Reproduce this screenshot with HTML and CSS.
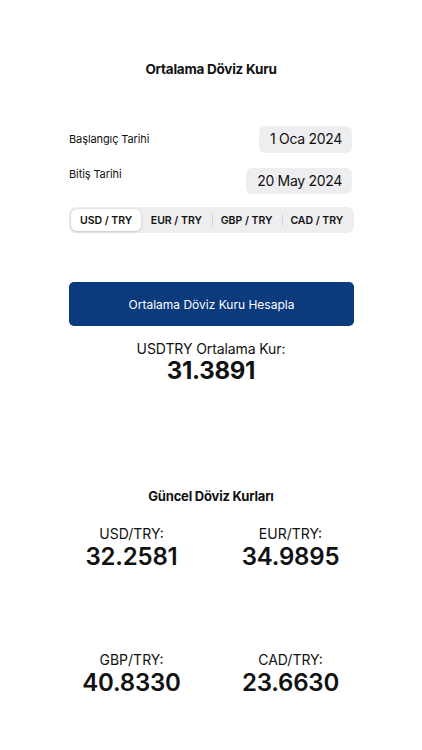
FILE: index.html
```html
<!DOCTYPE html>
<html lang="tr">
<head>
<meta charset="utf-8">
<link rel="stylesheet" href="styles.css">
</head>
<body>
<main class="page">
  <h1 class="title">Ortalama Döviz Kuru</h1>

  <section class="form">
    <div class="date-row first">
      <span class="date-label">Başlangıç Tarihi</span>
      <span class="date-pill">1 Oca 2024</span>
    </div>
    <div class="date-row second">
      <span class="date-label">Bitiş Tarihi</span>
      <span class="date-pill">20 May 2024</span>
    </div>

    <div class="segmented">
      <span class="seg selected">USD / TRY</span>
      <span class="seg">EUR / TRY</span>
      <span class="seg sep">GBP / TRY</span>
      <span class="seg sep">CAD / TRY</span>
    </div>

    <button class="calc-btn">Ortalama Döviz Kuru Hesapla</button>
  </section>

  <section class="result">
    <div class="result-label">USDTRY Ortalama Kur:</div>
    <div class="result-value">31.3891</div>
  </section>

  <h2 class="subtitle">Güncel Döviz Kurları</h2>

  <section class="rates">
    <div class="rate">
      <div class="rate-label">USD/TRY:</div>
      <div class="rate-value">32.2581</div>
    </div>
    <div class="rate">
      <div class="rate-label">EUR/TRY:</div>
      <div class="rate-value">34.9895</div>
    </div>
    <div class="rate lower">
      <div class="rate-label">GBP/TRY:</div>
      <div class="rate-value">40.8330</div>
    </div>
    <div class="rate lower">
      <div class="rate-label">CAD/TRY:</div>
      <div class="rate-value">23.6630</div>
    </div>
  </section>
</main>
</body>
</html>
```

FILE: styles.css
```css
* { box-sizing: border-box; }
html, body { margin: 0; padding: 0; background: #ffffff; }
body {
  font-family: Inter, "Open Sans", "Liberation Sans", sans-serif;
  color: #000;
  width: 422px;
}
.page {
  padding-top: 59px;
  display: flex;
  flex-direction: column;
  align-items: center;
}
.title {
  margin: 0;
  font-size: 13.5px;
  line-height: 20px;
  font-weight: 700;
  letter-spacing: -0.25px;
  color: #111;
}
.form {
  width: 285px;
  margin-top: 47px;
  margin-left: 1px;
  display: flex;
  flex-direction: column;
}
.date-row {
  display: flex;
  justify-content: space-between;
}
.date-row.first { align-items: center; height: 27px; }
.date-row.second { align-items: flex-start; height: 26px; margin-top: 15px; }
.date-label {
  font-size: 11px;
  line-height: 13px;
  letter-spacing: -0.1px;
  color: #111;
}
.date-pill {
  background: #eeeef0;
  border-radius: 6px;
  font-size: 14px;
  letter-spacing: -0.3px;
  line-height: 26px;
  height: 27px;
  padding: 0 10px 0 11px;
  color: #111;
  margin-right: 2px;
}
.date-row.second .date-pill { height: 26px; }
.segmented {
  margin-top: 13px;
  height: 26px;
  background: #eeeef0;
  border-radius: 7px;
  padding: 2px;
  display: grid;
  grid-template-columns: repeat(4, 1fr);
}
.seg {
  display: flex;
  align-items: center;
  justify-content: center;
  font-size: 10.5px;
  font-weight: 600;
  color: #111;
  position: relative;
}
.seg.sep::before {
  content: "";
  position: absolute;
  left: 0;
  top: 5px;
  bottom: 5px;
  width: 1px;
  background: #d6d6da;
}
.seg.selected {
  background: #fff;
  border-radius: 6px;
  box-shadow: 0 1px 3px rgba(0,0,0,0.14), 0 0 0 0.5px rgba(0,0,0,0.05);
}
.calc-btn {
  margin-top: 49px;
  height: 44px;
  border: none;
  border-radius: 5px;
  background: #0b3a7d;
  color: #fff;
  font-family: inherit;
  font-size: 12px;
  font-weight: 400;
}
.result {
  margin-top: 15px;
  text-align: center;
}
.result-label {
  font-size: 14px;
  line-height: 16px;
  letter-spacing: -0.1px;
  color: #111;
}
.result-value {
  font-size: 24px;
  line-height: 28px;
  font-weight: 700;
  letter-spacing: -0.3px;
  color: #111;
}
.subtitle {
  margin: 102px 0 0;
  font-size: 13px;
  line-height: 18px;
  font-weight: 700;
  letter-spacing: -0.2px;
  color: #111;
}
.rates {
  width: 318px;
  margin-top: 20px;
  display: grid;
  grid-template-columns: 1fr 1fr;
  row-gap: 80px;
}
.rate { text-align: center; }
.rate-label {
  font-size: 14px;
  line-height: 17px;
  color: #111;
}
.rate-value {
  font-size: 24px;
  line-height: 29px;
  font-weight: 600;
  letter-spacing: -0.2px;
  color: #111;
}
```
